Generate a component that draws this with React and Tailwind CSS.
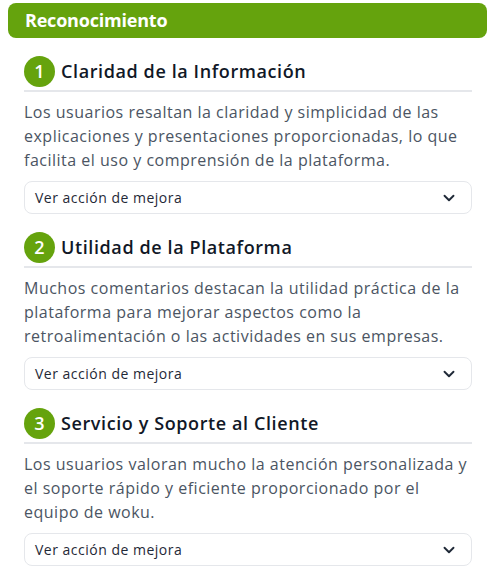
import { ChevronDown } from "lucide-react";

const ITEMS = [
  {
    n: 1,
    title: "Claridad de la Información",
    text: "Los usuarios resaltan la claridad y simplicidad de las explicaciones y presentaciones proporcionadas, lo que facilita el uso y comprensión de la plataforma.",
  },
  {
    n: 2,
    title: "Utilidad de la Plataforma",
    text: "Muchos comentarios destacan la utilidad práctica de la plataforma para mejorar aspectos como la retroalimentación o las actividades en sus empresas.",
  },
  {
    n: 3,
    title: "Servicio y Soporte al Cliente",
    text: "Los usuarios valoran mucho la atención personalizada y el soporte rápido y eficiente proporcionado por el equipo de woku.",
  },
];

export default function App() {
  return (
    <div className="min-h-screen bg-white pt-[3px]" style={{ fontFamily: '"Open Sans", "Noto Sans", sans-serif' }}>
      <div className="mx-2 flex h-[35px] items-center rounded-lg bg-[#65a30d] px-[17px]">
        <h1 className="text-[18px] font-bold tracking-[-0.2px] text-white">Reconocimiento</h1>
      </div>

      <div className="flex flex-col gap-[18px] pl-6 pr-[23px] pt-[18px]">
        {ITEMS.map((it) => (
          <section key={it.n}>
            <div className="flex items-center gap-[6px] border-b-2 border-[#e5e7eb] pb-[3px]">
              <span className="flex h-[31px] w-[31px] items-center justify-center rounded-full bg-[#65a30d] text-[18px] font-semibold text-white">
                {it.n}
              </span>
              <h2 className="text-[18px] font-semibold tracking-[0.6px] text-[#111827]">{it.title}</h2>
            </div>
            <p className="mt-[8px] text-[16px] leading-6 tracking-[0.5px] text-[#4b5563]">{it.text}</p>
            <button className="mt-[9px] flex h-[33px] w-full items-center justify-between rounded-lg border border-[#e5e7eb] bg-white pl-[10px] pr-[13px] text-left">
              <span className="text-[14px] tracking-[0.5px] text-[#1f2937]">Ver acción de mejora</span>
              <ChevronDown className="h-[18px] w-[18px] text-[#1f2937]" strokeWidth={2.5} />
            </button>
          </section>
        ))}
      </div>
    </div>
  );
}
